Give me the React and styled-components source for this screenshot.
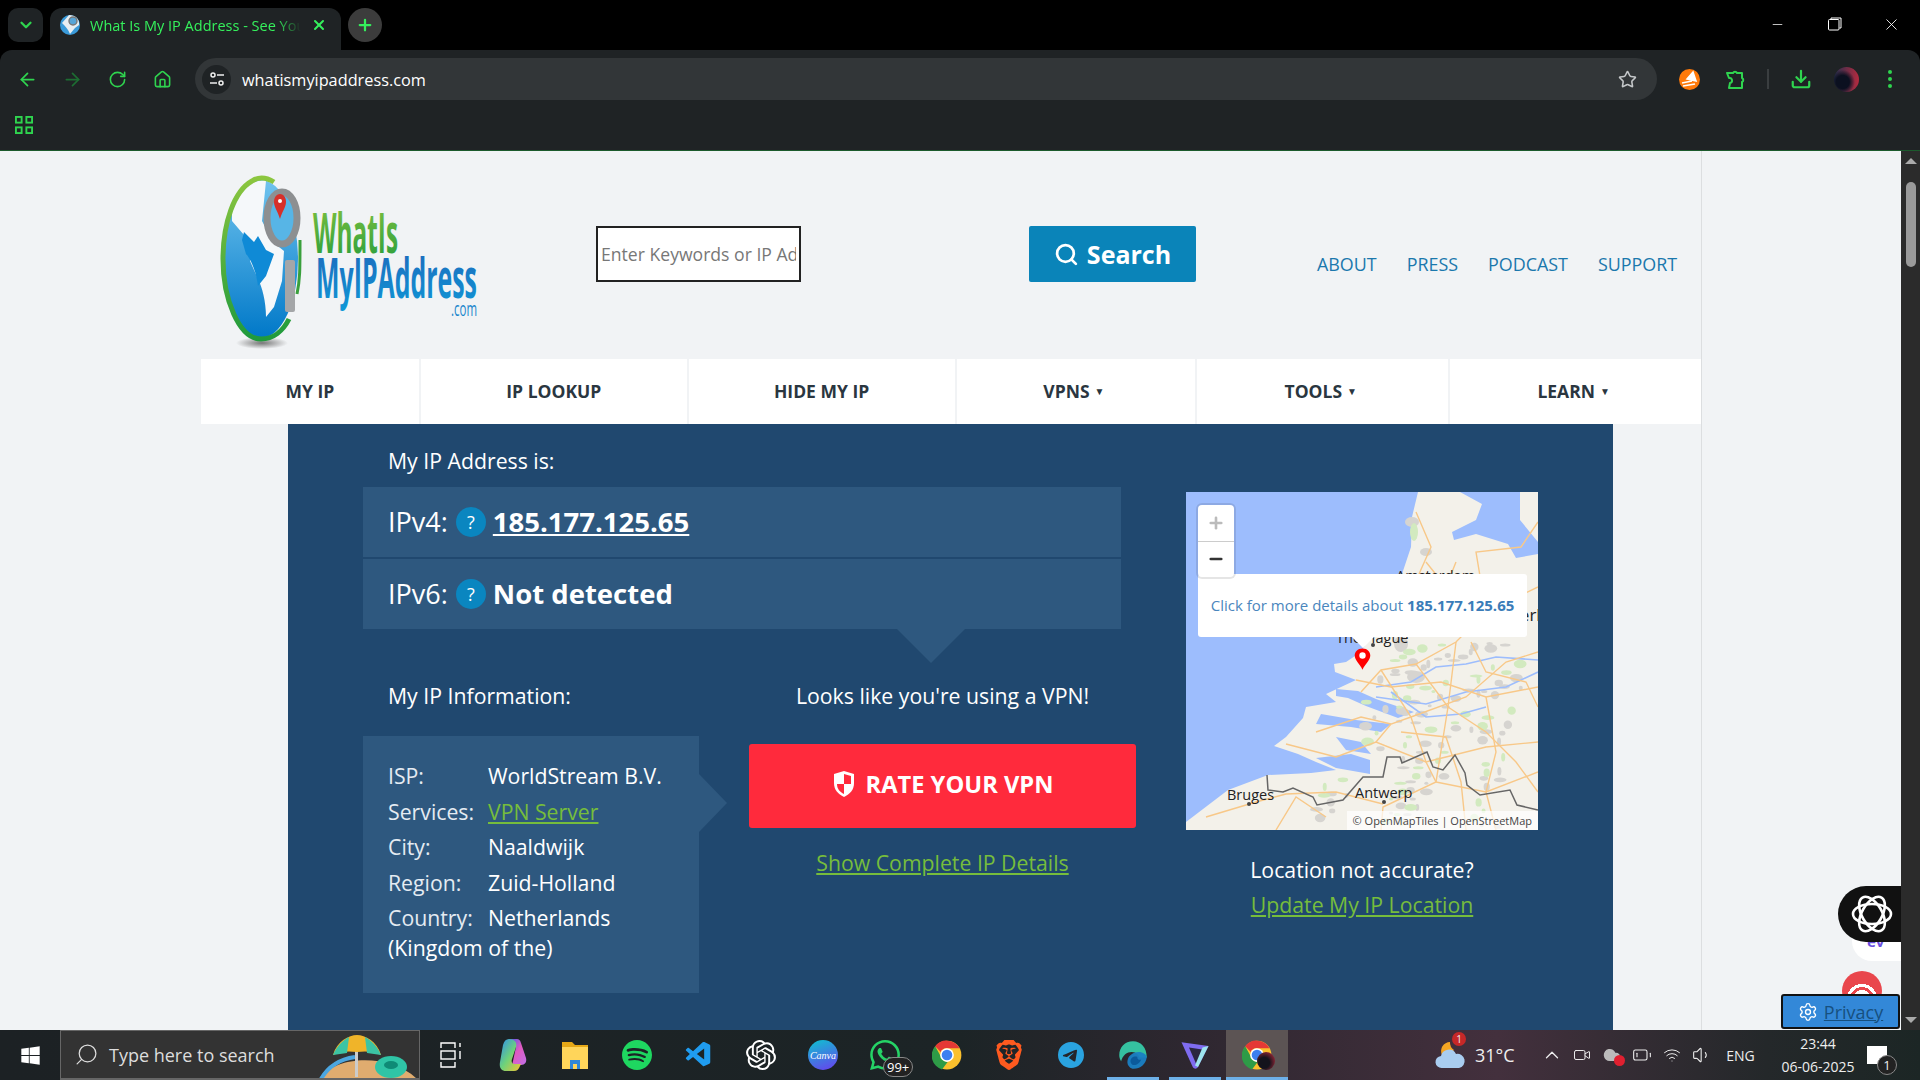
import React from 'react';
import styled, { createGlobalStyle } from 'styled-components';
import {
  ArrowLeft, ArrowRight, RotateCw, Home, Star, Download, X, Plus, ChevronDown,
  Minus, Search, Settings, ChevronUp, Video, Wifi, Volume1, BatteryLow, Cloud,
} from 'lucide-react';
import { SiOpenai, SiSpotify, SiBrave, SiTelegram, SiWhatsapp } from 'react-icons/si';
import { VscVscode } from 'react-icons/vsc';
import { FaWindows } from 'react-icons/fa';

const GREEN = '#2fd44f';
const SITE_FONT = '"Open Sans", "Noto Sans", sans-serif';

const Global = createGlobalStyle`
  html, body { margin: 0; padding: 0; height: 100%; overflow: hidden; background: #000; }
  #root { height: 100%; }
  * { box-sizing: border-box; }
`;

const Screen = styled.div`
  width: 1920px;
  height: 1080px;
  display: flex;
  flex-direction: column;
  overflow: hidden;
  font-family: ${SITE_FONT};
`;

/* browser chrome */
const TabStrip = styled.div`
  height: 50px;
  background: #000;
  display: flex;
  align-items: flex-start;
  padding: 8px 0 0 8px;
`;
const TabList = styled.button`
  width: 35px;
  height: 34px;
  border: 0;
  padding: 0;
  border-radius: 10px;
  background: #1f2325;
  color: ${GREEN};
  display: flex;
  align-items: center;
  justify-content: center;
`;
const Tab = styled.div`
  width: 291px;
  height: 42px;
  margin-left: 7px;
  padding: 0 14px 8px 10px;
  background: #1f2325;
  border-radius: 12px 12px 0 0;
  display: flex;
  align-items: center;
  gap: 10px;
  color: #35f05c;
  font-size: 14.5px;
`;
const TabTitle = styled.span`
  flex: 1;
  overflow: hidden;
  white-space: nowrap;
  -webkit-mask-image: linear-gradient(to right, #000 88%, transparent);
  mask-image: linear-gradient(to right, #000 88%, transparent);
`;
const NewTab = styled.button`
  width: 34px;
  height: 34px;
  margin-left: 7px;
  border: 0;
  padding: 0;
  border-radius: 50%;
  background: #3c3c3c;
  color: #35f05c;
  display: flex;
  align-items: center;
  justify-content: center;
`;
const WindowButtons = styled.div`
  margin-left: auto;
  margin-top: -8px;
  display: flex;
  color: #fff;
`;
const WindowButton = styled.div`
  width: 57px;
  height: 48px;
  display: flex;
  align-items: center;
  justify-content: center;
`;
const Toolbar = styled.div`
  height: 55px;
  background: #1f2325;
  border-radius: 12px 12px 0 0;
  display: flex;
  align-items: center;
  padding: 3px 0 0 5px;
`;
const NavIcon = styled.div`
  width: 45px;
  display: flex;
  justify-content: center;
  color: ${(p) => (p.$dim ? '#1d6d32' : GREEN)};
`;
const Omnibox = styled.div`
  width: 1462px;
  height: 42px;
  margin-left: 10px;
  border-radius: 21px;
  background: #323638;
  display: flex;
  align-items: center;
  padding: 0 20px 0 7px;
`;
const SiteInfo = styled.div`
  width: 29px;
  height: 29px;
  border-radius: 50%;
  background: #1f2325;
  display: flex;
  align-items: center;
  justify-content: center;
`;
const Url = styled.span`
  margin: 1px 0 0 11px;
  color: #fff;
  font-size: 16.3px;
  flex: 1;
`;
const ToolIcons = styled.div`
  display: flex;
  align-items: center;
  flex: 1;
  padding-left: 9px;
`;
const ToolSlot = styled.div`
  width: ${(p) => p.$w || 46}px;
  display: flex;
  justify-content: center;
  color: ${GREEN};
`;
const ToolDivider = styled.div`
  width: 2px;
  height: 20px;
  background: #3a3e40;
  margin: 0 10px 0 9px;
`;
const Avatar = styled.div`
  width: 25px;
  height: 25px;
  border-radius: 50%;
  background: radial-gradient(circle at 35% 60%, #0b1020 30%, transparent 55%), linear-gradient(90deg, #25304f, #b52a3f);
`;
const Kebab = styled.div`
  display: flex;
  flex-direction: column;
  gap: 3px;
`;
const KebabDot = styled.i`
  width: 4px;
  height: 4px;
  border-radius: 50%;
  background: ${GREEN};
`;
const Bookmarks = styled.div`
  height: 46px;
  background: #1f2325;
  border-bottom: 1px solid #1c5a2c;
  padding: 11px 0 0 15px;
`;

/* page */
const Viewport = styled.div`
  flex: 1;
  min-height: 0;
  display: flex;
`;
const Page = styled.div`
  flex: 1;
  position: relative;
  background: #f1f3f5;
  overflow: hidden;
`;
const Site = styled.div`
  width: 1501px;
  height: 100%;
  margin-left: 201px;
  border-right: 1px solid #dcdee0;
`;
const Header = styled.header`
  height: 208px;
  display: flex;
  align-items: flex-start;
  padding: 24px 0 0 19px;
`;
const SearchInput = styled.input`
  width: 205px;
  height: 56px;
  margin: 51px 0 0 116px;
  padding: 0 3px;
  border: 2px solid #222;
  background: #fff;
  font: 17.6px ${SITE_FONT};
  &::placeholder { color: #777; }
`;
const SearchButton = styled.button`
  width: 167px;
  height: 56px;
  margin: 51px 0 0 228px;
  border: 0;
  border-radius: 2px;
  background: #0a84b9;
  color: #fff;
  font: 700 25px ${SITE_FONT};
  display: flex;
  align-items: center;
  justify-content: center;
  gap: 8px;
`;
const TopLinks = styled.nav`
  display: flex;
  gap: 30px;
  margin: 77px 0 0 121px;
`;
const TopLink = styled.a`
  color: #1b78ad;
  font-size: 17.9px;
  line-height: 25px;
`;
const MainNav = styled.nav`
  height: 65px;
  background: #fff;
  display: flex;
`;
const NavCell = styled.div`
  width: ${(p) => p.$w}px;
  border-right: 2px solid #f1f3f5;
  padding-bottom: 2px;
  display: flex;
  align-items: center;
  justify-content: center;
  gap: 5px;
  color: #2a3640;
  font-size: 17.5px;
  font-weight: 700;
  &:last-child { border-right: 0; }
`;
const Caret = styled.span`
  margin-right: 4px;
  font-size: 10px;
`;
const Hero = styled.main`
  width: 1325px;
  height: 606px;
  margin-left: 87px;
  padding: 23px 0 0 75px;
  background: #20486f;
  color: #fff;
  display: flex;
  gap: 50px;
  font-size: 21.25px;
`;
const LeftCol = styled.div`
  width: 773px;
`;
const Heading = styled.div`
  line-height: 27px;
  padding-left: 25px;
`;
const IpRows = styled.div`
  position: relative;
  width: 758px;
  margin-top: 13px;
  display: flex;
  flex-direction: column;
  gap: 2px;
  &::after {
    content: '';
    position: absolute;
    left: 534px;
    top: 100%;
    border-style: solid;
    border-width: 34px 34px 0;
    border-color: #2e587f transparent transparent;
  }
`;
const IpRow = styled.div`
  height: 70px;
  padding: 0 0 2px 25px;
  background: #2e587f;
  display: flex;
  align-items: center;
  font-size: 27px;
`;
const Help = styled.span`
  width: 30px;
  height: 30px;
  margin: 2px 7px 0 8px;
  border-radius: 50%;
  background: #0a86c0;
  font-size: 18px;
  display: flex;
  align-items: center;
  justify-content: center;
`;
const IpValue = styled.span`
  font-size: 27.5px;
  font-weight: 700;
  text-decoration: ${(p) => (p.$link ? 'underline' : 'none')};
`;
const Lower = styled.div`
  display: grid;
  grid-template-columns: 336px 387px;
  column-gap: 50px;
  margin-top: 53px;
`;
const VpnNote = styled.div`
  line-height: 27px;
  text-align: center;
`;
const InfoBox = styled.div`
  position: relative;
  height: 257px;
  margin-top: 27px;
  padding: 25px 20px 0 25px;
  background: #2e587f;
  &::after {
    content: '';
    position: absolute;
    left: 100%;
    top: 38px;
    border-style: solid;
    border-width: 29px 0 29px 28px;
    border-color: transparent transparent transparent #2e587f;
  }
`;
const InfoRow = styled.div`
  line-height: 30px;
  margin-bottom: 5.5px;
`;
const InfoLabel = styled.span`
  display: inline-block;
  width: 100px;
  color: #e4ebf2;
`;
const GreenLink = styled.a`
  color: #76bd3c;
  text-decoration: underline;
`;
const VpnCol = styled.div`
  margin-top: 35px;
  display: flex;
  flex-direction: column;
  align-items: center;
`;
const RateButton = styled.button`
  width: 387px;
  height: 84px;
  padding: 0 0 4px;
  border: 0;
  border-radius: 3px;
  background: #ff2a3c;
  color: #fff;
  font: 700 23.7px ${SITE_FONT};
  display: flex;
  align-items: center;
  justify-content: center;
  gap: 10px;
`;
const DetailsLine = styled.div`
  margin-top: 21px;
  line-height: 27px;
`;
const RightCol = styled.div`
  width: 352px;
  margin-top: 45px;
  text-align: center;
`;
const MapBox = styled.div`
  position: relative;
  width: 352px;
  height: 338px;
  overflow: hidden;
  background: #9dbdfd;
`;
const ZoomControl = styled.div`
  position: absolute;
  left: 12px;
  top: 13px;
  width: 36px;
  height: 72px;
  border-radius: 4px;
  background: #fff;
  box-shadow: 0 0 0 2px rgba(0, 0, 0, 0.1);
  display: flex;
  flex-direction: column;
`;
const ZoomButton = styled.div`
  flex: 1;
  display: flex;
  align-items: center;
  justify-content: center;
  color: ${(p) => (p.$off ? '#bbb' : '#333')};
  border-bottom: ${(p) => (p.$off ? '1px solid #ccc' : '0')};
`;
const Popup = styled.div`
  position: absolute;
  left: 12px;
  top: 82px;
  width: 329px;
  height: 63px;
  padding-bottom: 2px;
  border-radius: 3px;
  background: #fff;
  color: #4a86bd;
  font-size: 15px;
  display: flex;
  align-items: center;
  justify-content: center;
  white-space: nowrap;
  &::after {
    content: '';
    position: absolute;
    left: 154px;
    top: 100%;
    border-style: solid;
    border-width: 11px 11px 0;
    border-color: #fff transparent transparent;
  }
`;
const Strong = styled.strong`
  margin-left: 4px;
  color: #3a7cb8;
`;
const Pin = styled.svg`
  position: absolute;
  left: 168px;
  top: 156px;
`;
const Attribution = styled.div`
  position: absolute;
  right: 0;
  bottom: 0;
  padding: 1px 6px 1px 6px;
  background: rgba(255, 255, 255, 0.7);
  color: #444;
  font-size: 11px;
  line-height: 17px;
  white-space: nowrap;
`;
const LocationLine = styled.div`
  margin-top: ${(p) => p.$mt}px;
  line-height: 27px;
`;

/* floating widgets, over the page */
const ChatBubble = styled.div`
  position: absolute;
  right: 0;
  top: 735px;
  width: 63px;
  height: 56px;
  border-radius: 28px 0 0 28px;
  background: #111;
  display: flex;
  align-items: center;
  padding-left: 12px;
  z-index: 2;
`;
const WhiteTab = styled.div`
  position: absolute;
  right: 0;
  top: 770px;
  width: 49px;
  height: 40px;
  border-radius: 0 0 0 20px;
  background: #fff;
  color: #6a4fe0;
  font-size: 15px;
  font-weight: 700;
  padding: 14px 0 0 15px;
  line-height: 12px;
`;
const RedCircle = styled.div`
  position: absolute;
  left: 1842px;
  top: 820px;
  width: 40px;
  height: 40px;
  border-radius: 50%;
  background: radial-gradient(circle at 50% 70%, #fff 0 9px, #e9464c 9px 12px, #fff 12px 15px, #e9464c 15px);
`;
const Privacy = styled.div`
  position: absolute;
  right: 1px;
  bottom: 1px;
  width: 119px;
  height: 35px;
  border: 2px solid #111;
  border-radius: 3px;
  background: #3388d8;
  color: #17507f;
  font-size: 18px;
  display: flex;
  align-items: center;
  justify-content: center;
  gap: 6px;
  text-decoration: underline;
`;
const Scrollbar = styled.div`
  width: 19px;
  background: #2b2b2b;
  display: flex;
  flex-direction: column;
  align-items: center;
  padding-top: 7px;
`;
const ArrowUp = styled.i`
  border-style: solid;
  border-width: 0 6px 6px;
  border-color: transparent transparent #aaa;
`;
const ArrowDown = styled.i`
  margin-top: auto;
  margin-bottom: 7px;
  border-style: solid;
  border-width: 6px 6px 0;
  border-color: #aaa transparent transparent;
`;
const Thumb = styled.div`
  width: 10px;
  height: 85px;
  margin-top: 18px;
  border-radius: 5px;
  background: #9a9a9a;
`;

/* taskbar */
const Taskbar = styled.footer`
  height: 50px;
  background: linear-gradient(90deg, #1c2124 0%, #1c2426 50%, #2e2730 62%, #43303d 78%, #24282a 92%, #1c2625 100%);
  display: flex;
  align-items: stretch;
  color: #fff;
`;
const StartButton = styled.div`
  width: 60px;
  display: flex;
  align-items: center;
  justify-content: center;
`;
const SearchBox = styled.div`
  position: relative;
  width: 360px;
  background: #333;
  border: 1px solid #666;
  border-bottom-width: 2px;
  display: flex;
  align-items: center;
  gap: 10px;
  padding-left: 13px;
  color: #ddd;
  font-size: 18px;
  overflow: hidden;
`;
const MirroredSearch = styled(Search)`
  transform: scaleX(-1);
`;
const Beach = styled.svg`
  position: absolute;
  right: 0;
  top: 0;
`;
const TaskIcons = styled.div`
  display: flex;
`;
const TaskIcon = styled.div`
  position: relative;
  width: 62px;
  display: flex;
  align-items: center;
  justify-content: center;
  background: ${(p) => (p.$active ? '#5c5454' : 'transparent')};
  &::after {
    content: '';
    display: ${(p) => (p.$open ? 'block' : 'none')};
    position: absolute;
    left: ${(p) => (p.$active ? 0 : 5)}px;
    right: ${(p) => (p.$active ? 0 : 5)}px;
    bottom: 0;
    height: 3px;
    background: #6db0e8;
  }
`;
const CountBadge = styled.span`
  position: absolute;
  left: 29px;
  top: 27px;
  padding: 0 3px;
  border: 1px solid #888;
  border-radius: 10px;
  background: #222;
  font-size: 13px;
  line-height: 18px;
  white-space: nowrap;
`;
const AvatarOverlay = styled.span`
  position: absolute;
  left: 31px;
  top: 22px;
  width: 18px;
  height: 18px;
  border-radius: 50%;
  background: radial-gradient(circle at 40% 60%, #14131c 35%, #a5283a 85%);
`;
const CanvaDisc = styled.div`
  width: 30px;
  height: 30px;
  border-radius: 50%;
  background: linear-gradient(160deg, #0cc4cf, #6b3df0);
  color: #fff;
  font: italic 10px "Liberation Serif", serif;
  display: flex;
  align-items: center;
  justify-content: center;
`;
const Tray = styled.div`
  margin-left: 137px;
  display: flex;
  align-items: center;
  color: #eee;
`;
const Weather = styled.div`
  position: relative;
  width: 50px;
  display: flex;
  justify-content: center;
`;
const Notice = styled.span`
  position: absolute;
  left: 27px;
  top: -8px;
  width: 14px;
  height: 14px;
  border-radius: 50%;
  background: #c62828;
  font-size: 10px;
  line-height: 14px;
  text-align: center;
`;
const Temp = styled.span`
  width: 62px;
  font-size: 18px;
`;
const TrayIcon = styled.div`
  position: relative;
  width: 30px;
  display: flex;
  justify-content: center;
`;
const ErrorDot = styled.span`
  position: absolute;
  left: 17px;
  top: 9px;
  width: 11px;
  height: 11px;
  border-radius: 50%;
  background: #e02030;
`;
const Lang = styled.span`
  width: 47px;
  text-align: center;
  font-size: 14px;
`;
const Clock = styled.div`
  width: 92px;
  margin-left: 8px;
  text-align: center;
  font-size: 14px;
  line-height: 23px;
`;
const NotifyButton = styled.div`
  position: relative;
  margin-left: 3px;
  width: 20px;
  height: 18px;
  background: #fff;
`;
const NotifyCount = styled.span`
  position: absolute;
  left: 10px;
  top: 9px;
  width: 20px;
  height: 20px;
  border-radius: 50%;
  border: 1px solid #888;
  background: #222;
  font-size: 13px;
  line-height: 18px;
  text-align: center;
`;

const Chrome = ({ size = 30 }) => (
  <svg width={size} height={size} viewBox="0 0 48 48">
    <circle cx="24" cy="24" r="23" fill="#fbc02d" />
    <path d="M24 1a23 23 0 0 1 20 12H24a11 11 0 0 0-10 6L5 10A23 23 0 0 1 24 1z" fill="#e53935" />
    <path d="M5 10l10 18a11 11 0 0 0 10 7l-9 12A23 23 0 0 1 5 10z" fill="#2e9b47" />
    <circle cx="24" cy="24" r="11" fill="#fff" />
    <circle cx="24" cy="24" r="8.5" fill="#3d7ff0" />
  </svg>
);

const Edge = () => (
  <svg width="30" height="32" viewBox="0 0 48 48">
    <path d="M24 2C11 2 2 12 2 24c0 4 1 7 3 10C8 22 18 17 27 20c5 2 7 6 7 8h12C46 12 37 2 24 2z" fill="#35c1a0" />
    <path d="M46 28c0-5-6-9-13-9-10 0-18 7-18 16 0 6 5 11 10 11 11 0 19-7 21-18z" fill="#1a7fc4" opacity="0.95" />
    <path d="M20 34c0-6 6-9 11-7-1 3 3 6 6 4-2 6-8 10-13 9-2-1-4-3-4-6z" fill="#0b5a9b" />
  </svg>
);

const Proton = () => (
  <svg width="30" height="32" viewBox="0 0 40 42">
    <path d="M2 4l36 5-14 28c-2 3-5 3-7 0z" fill="#7f6cf0" />
    <path d="M12 11l20 3-10 20z" fill="#2b2740" />
    <path d="M24 37l14-28-8 2-10 24z" fill="#9ee5ee" />
  </svg>
);

const Copilot = () => (
  <svg width="28" height="34" viewBox="0 0 28 34">
    <defs>
      <linearGradient id="copA" x1="0" x2="1" y1="0" y2="1">
        <stop offset="0" stopColor="#2b8df0" />
        <stop offset="0.5" stopColor="#6ed27a" />
        <stop offset="1" stopColor="#f4c531" />
      </linearGradient>
      <linearGradient id="copB" x1="0" x2="1" y1="0" y2="1">
        <stop offset="0" stopColor="#3d5af0" />
        <stop offset="0.5" stopColor="#e05ac0" />
        <stop offset="1" stopColor="#c070e8" />
      </linearGradient>
    </defs>
    <path d="M9 1h9c2 0 3 1 4 4l5 15c1 4-1 7-5 7h-6c-2 0-3-1-2-4L17 9c0-2 0-3-2-3z" fill="url(#copB)" />
    <path d="M10 1c-3 0-5 2-6 6L1 24c-1 5 1 9 6 9h8c3 0 5-2 6-5l1-2h-6c-3 0-4-2-3-5l4-12c1-3 0-8-7-8z" fill="url(#copA)" />
  </svg>
);

const Explorer = () => (
  <svg width="28" height="30" viewBox="0 0 28 30">
    <path d="M1 2h10l3 3h13v23H1z" fill="#e6a817" />
    <rect x="1" y="7" width="26" height="22" fill="#ffd55a" />
    <path d="M9 29v-9h10v9h-3v-5h-4v5z" fill="#2f87d8" />
  </svg>
);

const WeatherIcon = () => (
  <svg width="32" height="30" viewBox="0 0 32 30">
    <path d="M16 2a9 9 0 0 0-8 13l8-1 4-4a9 9 0 0 1-4-8z" fill="#f5a623" />
    <path d="M8 28a6 6 0 0 1-1-12 8 8 0 0 1 15-2 6.500 6.500 0 0 1 3 14z" fill="#a9cdf0" />
  </svg>
);

const Logo = () => (
  <svg width="260" height="175" viewBox="220 175 260 175">
    <defs>
      <linearGradient id="gr" x1="0" x2="0" y1="0" y2="1">
        <stop offset="0" stopColor="#8cc63f" />
        <stop offset="1" stopColor="#1f9a3c" />
      </linearGradient>
      <linearGradient id="bl" x1="0" x2="0" y1="0" y2="1">
        <stop offset="0" stopColor="#1f63b8" />
        <stop offset="1" stopColor="#0f9ad8" />
      </linearGradient>
      <linearGradient id="gb" x1="0" x2="0" y1="0" y2="1">
        <stop offset="0" stopColor="#6fc3ee" />
        <stop offset="1" stopColor="#0078c8" />
      </linearGradient>
      <radialGradient id="sh">
        <stop offset="0" stopColor="#777" />
        <stop offset="1" stopColor="#f1f3f5" />
      </radialGradient>
    </defs>
    <ellipse cx="262" cy="343" rx="26" ry="6" fill="url(#sh)" />
    <ellipse cx="261" cy="259" rx="37" ry="79" fill="url(#gb)" />
    <path d="M232 205c8-18 22-26 34-24l-4 40 12 22 10 8-2 30-8 26-8 10c0-16-4-30-8-38l-8-18 2-14-8-12-12-14z" fill="#f5f8fa" />
    <path d="M244 232l10 10 4-6 8 14 8 4-8 22-8 10c-2-16-8-28-12-32l-4-14z" fill="#0f8ad6" />
    <path d="M274 182c-8-5-16-5-22-1-18 10-29 42-29 78 0 40 16 80 38 80 12 0 22-8 28-20" fill="none" stroke="url(#gr)" strokeWidth="5" />
    <path d="M300 240c0 30 0 40-3 54" fill="none" stroke="#3aa03c" strokeWidth="3" />
    <ellipse cx="282" cy="218" rx="15" ry="26" fill="#57b5e6" stroke="#8d8f91" strokeWidth="7" />
    <path d="M280 194c-4 0-6 4-6 8 0 5 4 10 6 17 2-7 6-12 6-17 0-4-2-8-6-8z" fill="#d6302a" />
    <circle cx="280" cy="201" r="2" fill="#fff" />
    <rect x="285" y="260" width="10" height="52" rx="2" fill="#a4a6a8" />
    <text x="313" y="253" textLength="85" lengthAdjust="spacingAndGlyphs" fontFamily={SITE_FONT} fontSize="56" fontWeight="700" fill="url(#gr)">WhatIs</text>
    <text x="316" y="298" textLength="161" lengthAdjust="spacingAndGlyphs" fontFamily={SITE_FONT} fontSize="56" fontWeight="700" fill="url(#bl)">MyIPAddress</text>
    <text x="451" y="316" textLength="26" lengthAdjust="spacingAndGlyphs" fontFamily={SITE_FONT} fontSize="20" fill="#1a86cc">.com</text>
  </svg>
);

const ROADS = [
  'M175 200 L195 178 L230 172 L270 150 L300 120 L352 95',
  'M170 188 L205 195 L255 190 L300 205 L352 195',
  'M195 178 L225 225 L240 270 L250 290',
  'M230 172 L262 215 L300 240 L330 270 L352 300',
  'M190 250 L205 232 L225 225 L280 205 L320 170 L352 160',
  'M270 150 L262 215 L250 290 L197 315 L195 338',
  'M197 312 L150 300 L100 302 L70 310 L20 325',
  'M100 252 L150 265 L190 250 L240 270 L300 255 L352 250',
  'M230 20 L245 55 L225 100',
  'M300 120 L290 60 L335 55 L352 30',
  'M300 205 L310 260 L300 300 L310 338',
  'M130 240 L175 225 L205 232',
  'M250 290 L300 300 L352 280',
  'M285 150 L300 180 L340 190 L352 215',
  'M215 240 L260 245 L275 290 L280 338',
  'M90 338 L110 305 L140 325',
  'M240 70 L260 95 L270 70',
];
const RIVERS = [
  'M190 195 L225 190 L250 175 L280 172 L310 165 L352 168',
  'M190 205 L240 212 L280 200 L320 195 L352 180',
  'M205 200 L240 225 L275 222 L300 215',
];
// scattered towns and woods on the land part of the map
const scatter = (count, seed) => Array.from({ length: count }, (_, i) => {
  const a = (i * 7919 + seed * 104729) % 1000;
  const b = (i * 6271 + seed * 15485) % 1000;
  const x = 205 + (a / 1000) * 147;
  const y = 150 + (b / 1000) * 185;
  return [x - ((y - 150) / 185) * ((a % 7) * 25), y, 2 + (a % 5) * 1.1, 1.5 + (b % 4) * 0.9];
}).filter(([x, y]) => x > 130 && !(y > 255 && y < 285 && x < 190));
const URBAN = [[226, 30, 7, 5], [240, 60, 6, 4], [205, 130, 8, 6], [215, 152, 7, 8], [230, 185, 9, 6], ...scatter(85, 1)];
const FOREST = [[228, 40, 4, 9], [240, 90, 5, 4], ...scatter(50, 2)];

const MapArt = () => (
  <svg width="352" height="338" viewBox="0 0 352 338">
    <path d="M232 0 L226 25 L225 55 L215 85 L203 110 L190 135 L175 160 L160 170 L148 172 L149 180 L170 188 L140 202 L150 210 L120 215 L117 226 L100 245 L88 254 L112 262 L130 270 L150 278 L125 281 L82 283 L42 298 L0 330 L0 338 L352 338 L352 0 Z" fill="#f3f1ea" />
    <path d="M274 0 L334 0 L334 28 L352 50 L352 62 L330 66 L322 52 L290 42 L268 48 L266 40 L290 28 L296 12 Z" fill="#9dbdfd" />
    <path d="M150 197 L172 199 L190 207 L228 220 L212 226 L180 214 L162 206 L150 204 Z" fill="#9dbdfd" />
    <path d="M135 222 L170 228 L205 232 L195 240 L165 235 L130 232 Z" fill="#9dbdfd" />
    <path d="M150 245 L175 250 L185 262 L160 258 Z" fill="#9dbdfd" />
    <path d="M130 266 L165 262 L184 268 L184 282 L150 276 Z" fill="#9dbdfd" />
    {URBAN.map(([x, y, rx, ry], i) => <ellipse key={i} cx={x} cy={y} rx={rx} ry={ry} fill="#d6d4d0" />)}
    {FOREST.map(([x, y, rx, ry], i) => <ellipse key={i} cx={x} cy={y} rx={rx} ry={ry} fill="#d2eabf" />)}
    {RIVERS.map((d) => <path key={d} d={d} fill="none" stroke="#9dbdfd" strokeWidth="1.6" />)}
    {ROADS.map((d) => <path key={d} d={d} fill="none" stroke="#f8c888" strokeWidth="1.4" />)}
    <path d="M81 283 L82 298 L97 300 L107 296 L127 305 L131 313 L157 308 L177 285 L197 285 L201 265 L214 265 L216 271 L241 260 L247 275 L257 278 L269 263 L279 281 L281 293 L294 303 L324 298 L331 313 L352 318" fill="none" stroke="#666" strokeWidth="1.5" />
    <g fontFamily={SITE_FONT} fill="#222">
      <text x="41" y="308" fontSize="14.5">Bruges</text>
      <text x="169" y="306" fontSize="14.5">Antwerp</text>
      <text x="150" y="151" fontSize="14.5">The Hague</text>
      <text x="210" y="89" fontSize="14.5">Amsterdam</text>
      <text x="295" y="129" fontSize="17">Netherlands</text>
    </g>
    <circle cx="187" cy="153" r="2" fill="#444" />
    <circle cx="198" cy="310" r="2" fill="#444" />
    <circle cx="63" cy="312" r="2" fill="#444" />
  </svg>
);

const nav = [
  { label: 'MY IP', w: 220 },
  { label: 'IP LOOKUP', w: 268 },
  { label: 'HIDE MY IP', w: 268 },
  { label: 'VPNS', w: 241, caret: true },
  { label: 'TOOLS', w: 253, caret: true },
  { label: 'LEARN', w: 251, caret: true },
];

const info = [
  ['ISP:', 'WorldStream B.V.'],
  ['Services:', <GreenLink key="s">VPN Server</GreenLink>],
  ['City:', 'Naaldwijk'],
  ['Region:', 'Zuid-Holland'],
  ['Country:', 'Netherlands (Kingdom of the)'],
];

export default function App() {
  return (
    <Screen>
      <Global />
      <TabStrip>
        <TabList><ChevronDown size={18} strokeWidth={3} /></TabList>
        <Tab>
          <svg width="20" height="20" viewBox="0 0 20 20">
            <circle cx="10" cy="10" r="10" fill="#3a9ad9" />
            <path d="M9 0c6 0 11 4 10 10l-4 3-5 6c-2-5-5-8-8-11z" fill="#e8eef2" />
            <circle cx="13" cy="6" r="4" fill="#57a5d8" stroke="#777" strokeWidth="1.4" />
          </svg>
          <TabTitle>What Is My IP Address - See Your Public</TabTitle>
          <X size={16} strokeWidth={3} />
        </Tab>
        <NewTab><Plus size={18} strokeWidth={3} /></NewTab>
        <WindowButtons>
          <WindowButton><Minus size={15} strokeWidth={1.2} /></WindowButton>
          <WindowButton>
            <svg width="14" height="14" viewBox="0 0 14 14" fill="none" stroke="#fff">
              <rect x="0.5" y="2.5" width="10.5" height="10.5" rx="1" />
              <path d="M3 2.5V1h10v10h-1.5" />
            </svg>
          </WindowButton>
          <WindowButton><X size={19} strokeWidth={1.1} /></WindowButton>
        </WindowButtons>
      </TabStrip>

      <Toolbar>
        <NavIcon><ArrowLeft size={21} /></NavIcon>
        <NavIcon $dim><ArrowRight size={21} /></NavIcon>
        <NavIcon><RotateCw size={19} /></NavIcon>
        <NavIcon><Home size={19} /></NavIcon>
        <Omnibox>
          <SiteInfo>
            <svg width="16" height="16" viewBox="0 0 16 16" fill="none" stroke="#eee" strokeWidth="1.5">
              <circle cx="4" cy="4" r="2" />
              <circle cx="12" cy="12" r="2" />
              <path d="M8 4h7M1 12h7" />
            </svg>
          </SiteInfo>
          <Url>whatismyipaddress.com</Url>
          <Star size={19} color="#c4c7c9" strokeWidth={2} />
        </Omnibox>
        <ToolIcons>
          <ToolSlot>
            <svg width="21" height="21" viewBox="0 0 21 21">
              <circle cx="10.5" cy="10.5" r="10.5" fill="#ff7a0a" />
              <path d="M3 14l10-2M4 17l12-2M8 10l6-7 3 9z" stroke="#fff" strokeWidth="1.6" fill="#fff" />
            </svg>
          </ToolSlot>
          <ToolSlot>
            <svg width="21" height="22" viewBox="0 0 21 22" fill="none" stroke={GREEN} strokeWidth="2" strokeLinejoin="round">
              <path d="M2 5h6a2.2 2.2 0 0 1 4 0h5v5a2.2 2.2 0 0 1 0 4v6H4l1-5a2.500 2.500 0 0 0-1-5z" />
            </svg>
          </ToolSlot>
          <ToolDivider />
          <ToolSlot $w={44}><Download size={22} strokeWidth={2.4} /></ToolSlot>
          <ToolSlot><Avatar /></ToolSlot>
          <ToolSlot $w={42}>
            <Kebab><KebabDot /><KebabDot /><KebabDot /></Kebab>
          </ToolSlot>
        </ToolIcons>
      </Toolbar>
      <Bookmarks>
        <svg width="18" height="18" viewBox="0 0 19 19" fill="none" stroke={GREEN} strokeWidth="2">
          <rect x="1" y="1" width="6" height="6" />
          <rect x="12" y="1" width="6" height="6" />
          <rect x="1" y="12" width="6" height="6" />
          <rect x="12" y="12" width="6" height="6" />
        </svg>
      </Bookmarks>

      <Viewport>
        <Page>
          <Site>
            <Header>
              <Logo />
              <SearchInput placeholder="Enter Keywords or IP Address" />
              <SearchButton><Search size={25} strokeWidth={2.6} />Search</SearchButton>
              <TopLinks>
                <TopLink>ABOUT</TopLink>
                <TopLink>PRESS</TopLink>
                <TopLink>PODCAST</TopLink>
                <TopLink>SUPPORT</TopLink>
              </TopLinks>
            </Header>
            <MainNav>
              {nav.map((n) => (
                <NavCell key={n.label} $w={n.w}>
                  {n.label}
                  {n.caret && <Caret>▼</Caret>}
                </NavCell>
              ))}
            </MainNav>
            <Hero>
              <LeftCol>
                <Heading>My IP Address is:</Heading>
                <IpRows>
                  <IpRow>IPv4:<Help>?</Help><IpValue $link>185.177.125.65</IpValue></IpRow>
                  <IpRow>IPv6:<Help>?</Help><IpValue>Not detected</IpValue></IpRow>
                </IpRows>
                <Lower>
                  <Heading>My IP Information:</Heading>
                  <VpnNote>Looks like you're using a VPN!</VpnNote>
                  <InfoBox>
                    {info.map(([label, value]) => (
                      <InfoRow key={label}>
                        <InfoLabel>{label}</InfoLabel>
                        {value}
                      </InfoRow>
                    ))}
                  </InfoBox>
                  <VpnCol>
                    <RateButton>
                      <svg width="24" height="28" viewBox="0 0 24 28">
                        <path d="M12 1l10 3v9c0 7-4 11-10 14C6 24 2 20 2 13V4z" fill="#fff" />
                        <path d="M12 4v10H5c0 5 3 8 7 10V14h7V6z" fill="#ff2a3c" />
                      </svg>
                      RATE YOUR VPN
                    </RateButton>
                    <DetailsLine><GreenLink>Show Complete IP Details</GreenLink></DetailsLine>
                  </VpnCol>
                </Lower>
              </LeftCol>
              <RightCol>
                <MapBox>
                  <MapArt />
                  <Popup>
                    Click for more details about<Strong>185.177.125.65</Strong>
                  </Popup>
                  <Pin width="17" height="22" viewBox="0 0 24 30">
                    <path d="M12 0C5 0 1 5 1 10c0 7 8 13 11 20 3-7 11-13 11-20C23 5 19 0 12 0z" fill="#f00" />
                    <circle cx="12" cy="10" r="4.5" fill="#fff" />
                  </Pin>
                  <ZoomControl>
                    <ZoomButton $off><Plus size={18} strokeWidth={3.5} /></ZoomButton>
                    <ZoomButton><Minus size={18} strokeWidth={3.5} /></ZoomButton>
                  </ZoomControl>
                  <Attribution>© OpenMapTiles | OpenStreetMap</Attribution>
                </MapBox>
                <LocationLine $mt={26}>Location not accurate?</LocationLine>
                <LocationLine $mt={8}><GreenLink>Update My IP Location</GreenLink></LocationLine>
              </RightCol>
            </Hero>
          </Site>
          <WhiteTab>ev</WhiteTab>
          <RedCircle />
          <ChatBubble>
            <svg width="44" height="44" viewBox="0 0 44 44" fill="none" stroke="#fff" strokeWidth="2.6">
              <ellipse cx="22" cy="22" rx="19" ry="10" />
              <ellipse cx="22" cy="22" rx="19" ry="10" transform="rotate(60 22 22)" />
              <ellipse cx="22" cy="22" rx="19" ry="10" transform="rotate(120 22 22)" />
            </svg>
          </ChatBubble>
          <Privacy><Settings size={20} color="#fff" strokeWidth={1.6} />Privacy</Privacy>
        </Page>
        <Scrollbar>
          <ArrowUp />
          <Thumb />
          <ArrowDown />
        </Scrollbar>
      </Viewport>

      <Taskbar>
        <StartButton><FaWindows size={21} color="#fff" /></StartButton>
        <SearchBox>
          <MirroredSearch size={25} strokeWidth={1.2} />
          Type here to search
          <Beach width="100" height="48" viewBox="0 0 100 48">
            <path d="M2 48c12-24 70-26 96 0z" fill="#e0ac6f" />
            <path d="M2 48c8-14 20-20 34-22" fill="none" stroke="#4ba6e0" strokeWidth="4" />
            <rect x="36" y="8" width="3" height="38" fill="#ccc" />
            <path d="M14 24C18 10 30 4 38 4s20 6 24 20c-8-4-16-4-24-3-8-1-16-1-24 3z" fill="#f0b429" />
            <path d="M14 24c4-10 12-16 16-18l-2 16zM62 24c-4-10-12-16-16-18l2 16z" fill="#3cc4a4" />
            <ellipse cx="72" cy="36" rx="16" ry="11" fill="#2fc4a6" />
            <ellipse cx="72" cy="34" rx="7" ry="4" fill="#0f8a76" />
          </Beach>
        </SearchBox>
        <TaskIcons>
          <TaskIcon>
            <svg width="22" height="26" viewBox="0 0 22 26" fill="none" stroke="#fff" strokeWidth="1.4">
              <path d="M1 6V1h14v5M1 20v5h14v-5" />
              <rect x="1" y="9" width="14" height="8" />
              <path d="M20 1v4M20 9v8" />
            </svg>
          </TaskIcon>
          <TaskIcon><Copilot /></TaskIcon>
          <TaskIcon><Explorer /></TaskIcon>
          <TaskIcon><SiSpotify size={30} color="#1ed760" /></TaskIcon>
          <TaskIcon><VscVscode size={30} color="#1f9cf0" /></TaskIcon>
          <TaskIcon><SiOpenai size={30} color="#fff" /></TaskIcon>
          <TaskIcon><CanvaDisc>Canva</CanvaDisc></TaskIcon>
          <TaskIcon>
            <SiWhatsapp size={30} color="#25d366" />
            <CountBadge>99+</CountBadge>
          </TaskIcon>
          <TaskIcon><Chrome /></TaskIcon>
          <TaskIcon><SiBrave size={30} color="#ff5a1f" /></TaskIcon>
          <TaskIcon><SiTelegram size={26} color="#2aa3e0" /></TaskIcon>
          <TaskIcon $open><Edge /></TaskIcon>
          <TaskIcon $open><Proton /></TaskIcon>
          <TaskIcon $open $active><Chrome /><AvatarOverlay /></TaskIcon>
        </TaskIcons>
        <Tray>
          <Weather>
            <WeatherIcon />
            <Notice>1</Notice>
          </Weather>
          <Temp>31°C</Temp>
          <TrayIcon><ChevronUp size={22} strokeWidth={1.4} /></TrayIcon>
          <TrayIcon><Video size={18} strokeWidth={1.3} /></TrayIcon>
          <TrayIcon><Cloud size={18} fill="#bbb" color="#bbb" /><ErrorDot /></TrayIcon>
          <TrayIcon><BatteryLow size={20} strokeWidth={1.3} /></TrayIcon>
          <TrayIcon><Wifi size={18} strokeWidth={1.3} /></TrayIcon>
          <TrayIcon><Volume1 size={20} strokeWidth={1.3} /></TrayIcon>
          <Lang>ENG</Lang>
          <Clock>23:44<br />06-06-2025</Clock>
          <NotifyButton><NotifyCount>1</NotifyCount></NotifyButton>
        </Tray>
      </Taskbar>
    </Screen>
  );
}
